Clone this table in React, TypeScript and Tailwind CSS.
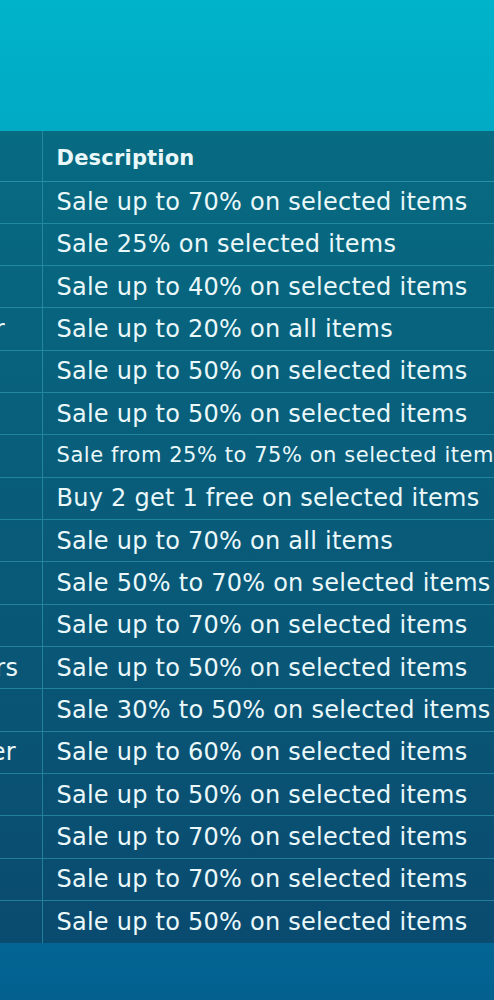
const offers = [
  { store: 'Fashion Outlet', text: 'Sale up to 70% on selected items' },
  { store: 'Shoe Palace', text: 'Sale 25% on selected items' },
  { store: 'Home Living', text: 'Sale up to 40% on selected items' },
  { store: 'Outdoor Gear Maker', text: 'Sale up to 20% on all items' },
  { store: 'Urban Style', text: 'Sale up to 50% on selected items' },
  { store: 'Kids World', text: 'Sale up to 50% on selected items' },
  { store: 'Beauty Box', text: 'Sale from 25% to 75% on selected items', small: true },
  { store: 'Book Nook', text: 'Buy 2 get 1 free on selected items' },
  { store: 'Denim Co', text: 'Sale up to 70% on all items' },
  { store: 'Luxe Bags', text: 'Sale 50% to 70% on selected items' },
  { store: 'Sport Zone', text: 'Sale up to 70% on selected items' },
  { store: 'Watches & Engravers', text: 'Sale up to 50% on selected items' },
  { store: 'Tech Hub', text: 'Sale 30% to 50% on selected items' },
  { store: 'Audio & Hi-Fi Retailer', text: 'Sale up to 60% on selected items' },
  { store: 'Optic Eyes', text: 'Sale up to 50% on selected items' },
  { store: 'Toy Town', text: 'Sale up to 70% on selected items' },
  { store: 'Lingerie', text: 'Sale up to 70% on selected items' },
  { store: 'Gift Shop', text: 'Sale up to 50% on selected items' },
];

export default function App() {
  return (
    <div
      className="w-full h-[1000px] overflow-hidden bg-gradient-to-b from-[#00b3ca] via-[#0390b4] to-[#03608f] pt-[131px]"
      style={{ fontFamily: '"DejaVu Sans", "Open Sans", sans-serif' }}
    >
      {/* table is scrolled sideways, store column mostly out of view */}
      <div className="-ml-[258px] w-[900px]">
        <table className="border-collapse bg-gradient-to-b from-[#076b82] to-[#0a4b70] text-[#eaf8fa]">
          <thead>
            <tr className="h-[50px] border-b border-[#34a0b8]/70">
              <th className="w-[300px] border-r border-[#34a0b8]/60 pl-[14px] text-left text-[21px] font-bold">Store</th>
              <th className="w-[600px] pl-[14px] pt-[5px] text-left text-[21px] font-bold tracking-[0.2px]">Description</th>
            </tr>
          </thead>
          <tbody>
            {offers.map((o, i) => (
              <tr key={i} className="h-[42.33px] border-b border-[#34a0b8]/60 last:border-b-0">
                <td className="border-r border-[#34a0b8]/60 pl-[14px] text-[24px] tracking-[0.25px] whitespace-nowrap overflow-hidden">
                  {o.store}
                </td>
                <td
                  className={`pl-[14px] whitespace-nowrap ${
                    o.small ? 'text-[21px] tracking-[0.55px]' : 'text-[24px] tracking-[0.25px]'
                  }`}
                >
                  {o.text}
                </td>
              </tr>
            ))}
          </tbody>
        </table>
      </div>
    </div>
  );
}
